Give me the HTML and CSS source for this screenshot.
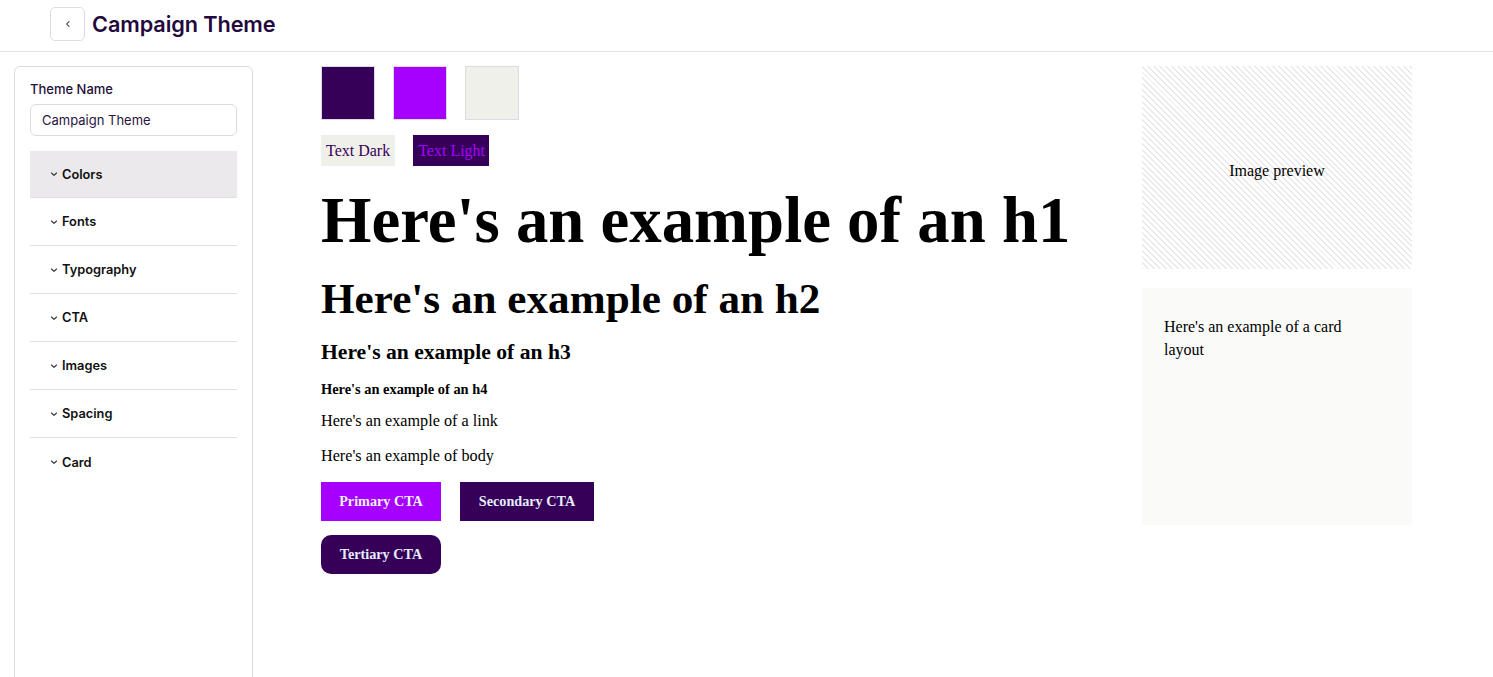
FILE: index.html
```html
<!DOCTYPE html>
<html lang="en">
<head>
<meta charset="utf-8">
<title>Campaign Theme</title>
<link rel="stylesheet" href="styles.css">
</head>
<body>
<header class="topbar">
  <button class="back-btn" type="button" aria-label="Back">
    <svg width="8" height="8" viewBox="0 0 8 8"><polyline points="5,1.5 2.7,4 5,6.5" fill="none" stroke="#333" stroke-width="1.1" stroke-linecap="round" stroke-linejoin="round"/></svg>
  </button>
  <h1 class="page-title">Campaign Theme</h1>
</header>
<div class="workspace">
  <aside class="sidebar">
    <label class="field-label" for="theme-name">Theme Name</label>
    <input class="field-input" id="theme-name" type="text" value="Campaign Theme">
    <ul class="accordion">
      <li class="acc-item active"><svg class="chev" width="8" height="8" viewBox="0 0 8 8"><polyline points="1.5,3 4,5.4 6.5,3" fill="none" stroke="#333" stroke-width="1.1" stroke-linecap="round" stroke-linejoin="round"/></svg>Colors</li>
      <li class="acc-item"><svg class="chev" width="8" height="8" viewBox="0 0 8 8"><polyline points="1.5,3 4,5.4 6.5,3" fill="none" stroke="#333" stroke-width="1.1" stroke-linecap="round" stroke-linejoin="round"/></svg>Fonts</li>
      <li class="acc-item"><svg class="chev" width="8" height="8" viewBox="0 0 8 8"><polyline points="1.5,3 4,5.4 6.5,3" fill="none" stroke="#333" stroke-width="1.1" stroke-linecap="round" stroke-linejoin="round"/></svg>Typography</li>
      <li class="acc-item"><svg class="chev" width="8" height="8" viewBox="0 0 8 8"><polyline points="1.5,3 4,5.4 6.5,3" fill="none" stroke="#333" stroke-width="1.1" stroke-linecap="round" stroke-linejoin="round"/></svg>CTA</li>
      <li class="acc-item"><svg class="chev" width="8" height="8" viewBox="0 0 8 8"><polyline points="1.5,3 4,5.4 6.5,3" fill="none" stroke="#333" stroke-width="1.1" stroke-linecap="round" stroke-linejoin="round"/></svg>Images</li>
      <li class="acc-item"><svg class="chev" width="8" height="8" viewBox="0 0 8 8"><polyline points="1.5,3 4,5.4 6.5,3" fill="none" stroke="#333" stroke-width="1.1" stroke-linecap="round" stroke-linejoin="round"/></svg>Spacing</li>
      <li class="acc-item last"><svg class="chev" width="8" height="8" viewBox="0 0 8 8"><polyline points="1.5,3 4,5.4 6.5,3" fill="none" stroke="#333" stroke-width="1.1" stroke-linecap="round" stroke-linejoin="round"/></svg>Card</li>
    </ul>
  </aside>
  <main class="preview">
    <section class="preview-main">
      <div class="swatches">
        <div class="swatch swatch-dark"></div>
        <div class="swatch swatch-bright"></div>
        <div class="swatch swatch-light"></div>
      </div>
      <div class="chips">
        <span class="chip chip-dark">Text Dark</span>
        <span class="chip chip-light">Text Light</span>
      </div>
      <h1 class="ex-h1">Here's an example of an h1</h1>
      <h2 class="ex-h2">Here's an example of an h2</h2>
      <h3 class="ex-h3">Here's an example of an h3</h3>
      <h4 class="ex-h4">Here's an example of an h4</h4>
      <a class="ex-link" href="#">Here's an example of a link</a>
      <p class="ex-body">Here's an example of body</p>
      <div class="cta-row">
        <button class="cta cta-primary" type="button">Primary CTA</button>
        <button class="cta cta-secondary" type="button">Secondary CTA</button>
      </div>
      <div class="cta-row tertiary-row">
        <button class="cta cta-tertiary" type="button">Tertiary CTA</button>
      </div>
    </section>
    <section class="preview-side">
      <div class="image-preview">Image preview</div>
      <div class="card-preview">Here's an example of a card layout</div>
    </section>
  </main>
</div>
</body>
</html>
```
FILE: styles.css
```css
* { box-sizing: border-box; }
html, body { margin: 0; padding: 0; }
body {
  background: #ffffff;
  font-family: Inter, "Noto Sans", sans-serif;
  color: #111;
  overflow: hidden;
  height: 677px;
}

.topbar {
  display: flex;
  align-items: center;
  height: 52px;
  padding: 0 0 3px 50px;
  border-bottom: 1px solid #e2e2e2;
}
.back-btn {
  width: 35px;
  height: 34px;
  margin: 0;
  padding: 0;
  border: 1px solid #dddddd;
  border-radius: 5px;
  background: #fff;
  display: flex;
  align-items: center;
  justify-content: center;
}
.page-title {
  margin: 0 0 0 7px;
  font-size: 21.7px;
  font-weight: 600;
  color: #23093d;
  letter-spacing: -0.1px;
}

.workspace {
  display: flex;
  align-items: flex-start;
  padding: 14px 0 0 14px;
}

.sidebar {
  flex: none;
  width: 239px;
  height: 680px;
  border: 1px solid #dcdcdc;
  border-radius: 6px;
  padding: 14px 15px;
  display: flex;
  flex-direction: column;
}
.field-label {
  font-size: 13px;
  line-height: 16px;
  font-weight: 500;
  color: #24103c;
  margin-bottom: 7px;
}
.field-input {
  height: 32px;
  border: 1px solid #dcdcdc;
  border-radius: 6px;
  padding: 0 11px;
  font-family: Inter, "Noto Sans", sans-serif;
  font-size: 13px;
  color: #2a1542;
  background: #fff;
  outline: none;
}
.accordion {
  list-style: none;
  margin: 15px 0 0;
  padding: 0;
}
.acc-item {
  display: flex;
  align-items: center;
  gap: 4px;
  height: 48px;
  padding-left: 20px;
  border-bottom: 1px solid #e0e0e0;
  font-size: 12.8px;
  font-weight: 600;
  color: #111;
}
.acc-item.active {
  background: #ebe9ec;
  height: 47px;
}
.acc-item.last { border-bottom: none; }
.chev { flex: none; }

.preview {
  margin-left: 68px;
  width: 1091px;
  display: flex;
  gap: 30px;
  font-family: "Liberation Serif", "Times New Roman", serif;
  color: #000;
}
.preview-main {
  flex: 1;
  display: flex;
  flex-direction: column;
  align-items: flex-start;
}
.swatches {
  display: flex;
  gap: 18px;
}
.swatch {
  width: 54px;
  height: 54px;
  border: 1px solid #dcdce0;
}
.swatch-dark { background: #360058; }
.swatch-bright { background: #a600ff; }
.swatch-light { background: #f0f0eb; }

.chips {
  display: flex;
  gap: 18px;
  margin-top: 15px;
}
.chip {
  display: inline-flex;
  align-items: center;
  height: 31px;
  padding: 0 5px;
  font-size: 16px;
}
.chip-dark { background: #f0f0eb; color: #360058; }
.chip-light { background: #360058; color: #a600ff; padding: 0 4px 0 5px; }

.ex-h1, .ex-h2, .ex-h3, .ex-h4, .ex-body { margin: 0; line-height: normal; font-weight: 700; }
.ex-h1 { font-size: 64.8px; margin-top: 17px; }
.ex-h2 { font-size: 43.2px; margin-top: 16px; }
.ex-h3 { font-size: 21.6px; margin-top: 17px; }
.ex-h4 { font-size: 14.4px; margin-top: 16px; }
.ex-link {
  display: block;
  margin-top: 14px;
  font-size: 16.2px;
  color: #000;
  text-decoration: none;
}
.ex-body {
  margin-top: 16px;
  font-size: 16.2px;
  font-weight: 400;
}

.cta-row {
  display: flex;
  gap: 19px;
  margin-top: 16px;
}
.tertiary-row { margin-top: 14px; }
.cta {
  height: 39px;
  padding: 0 18px;
  border: none;
  margin: 0;
  font-family: "Liberation Serif", "Times New Roman", serif;
  font-size: 14.2px;
  font-weight: 700;
  color: #eef0ff;
}
.cta-primary { background: #a600ff; width: 120px; }
.cta-secondary { background: #360058; width: 134px; color: #e4eefc; }
.cta-tertiary { background: #360058; width: 120px; border-radius: 10px; color: #e4eefc; }

.preview-side {
  flex: none;
  width: 270px;
  display: flex;
  flex-direction: column;
  gap: 19px;
}
.image-preview {
  height: 203px;
  display: flex;
  align-items: center;
  justify-content: center;
  font-size: 16px;
  padding-top: 6px;
  background: repeating-linear-gradient(45deg, #e9e9e9 0 1.4px, #ffffff 1.4px 4.2px);
}
.card-preview {
  height: 237px;
  background: #fafaf9;
  padding: 27px 46px 22px 22px;
  font-size: 16px;
  line-height: 23px;
}
```
